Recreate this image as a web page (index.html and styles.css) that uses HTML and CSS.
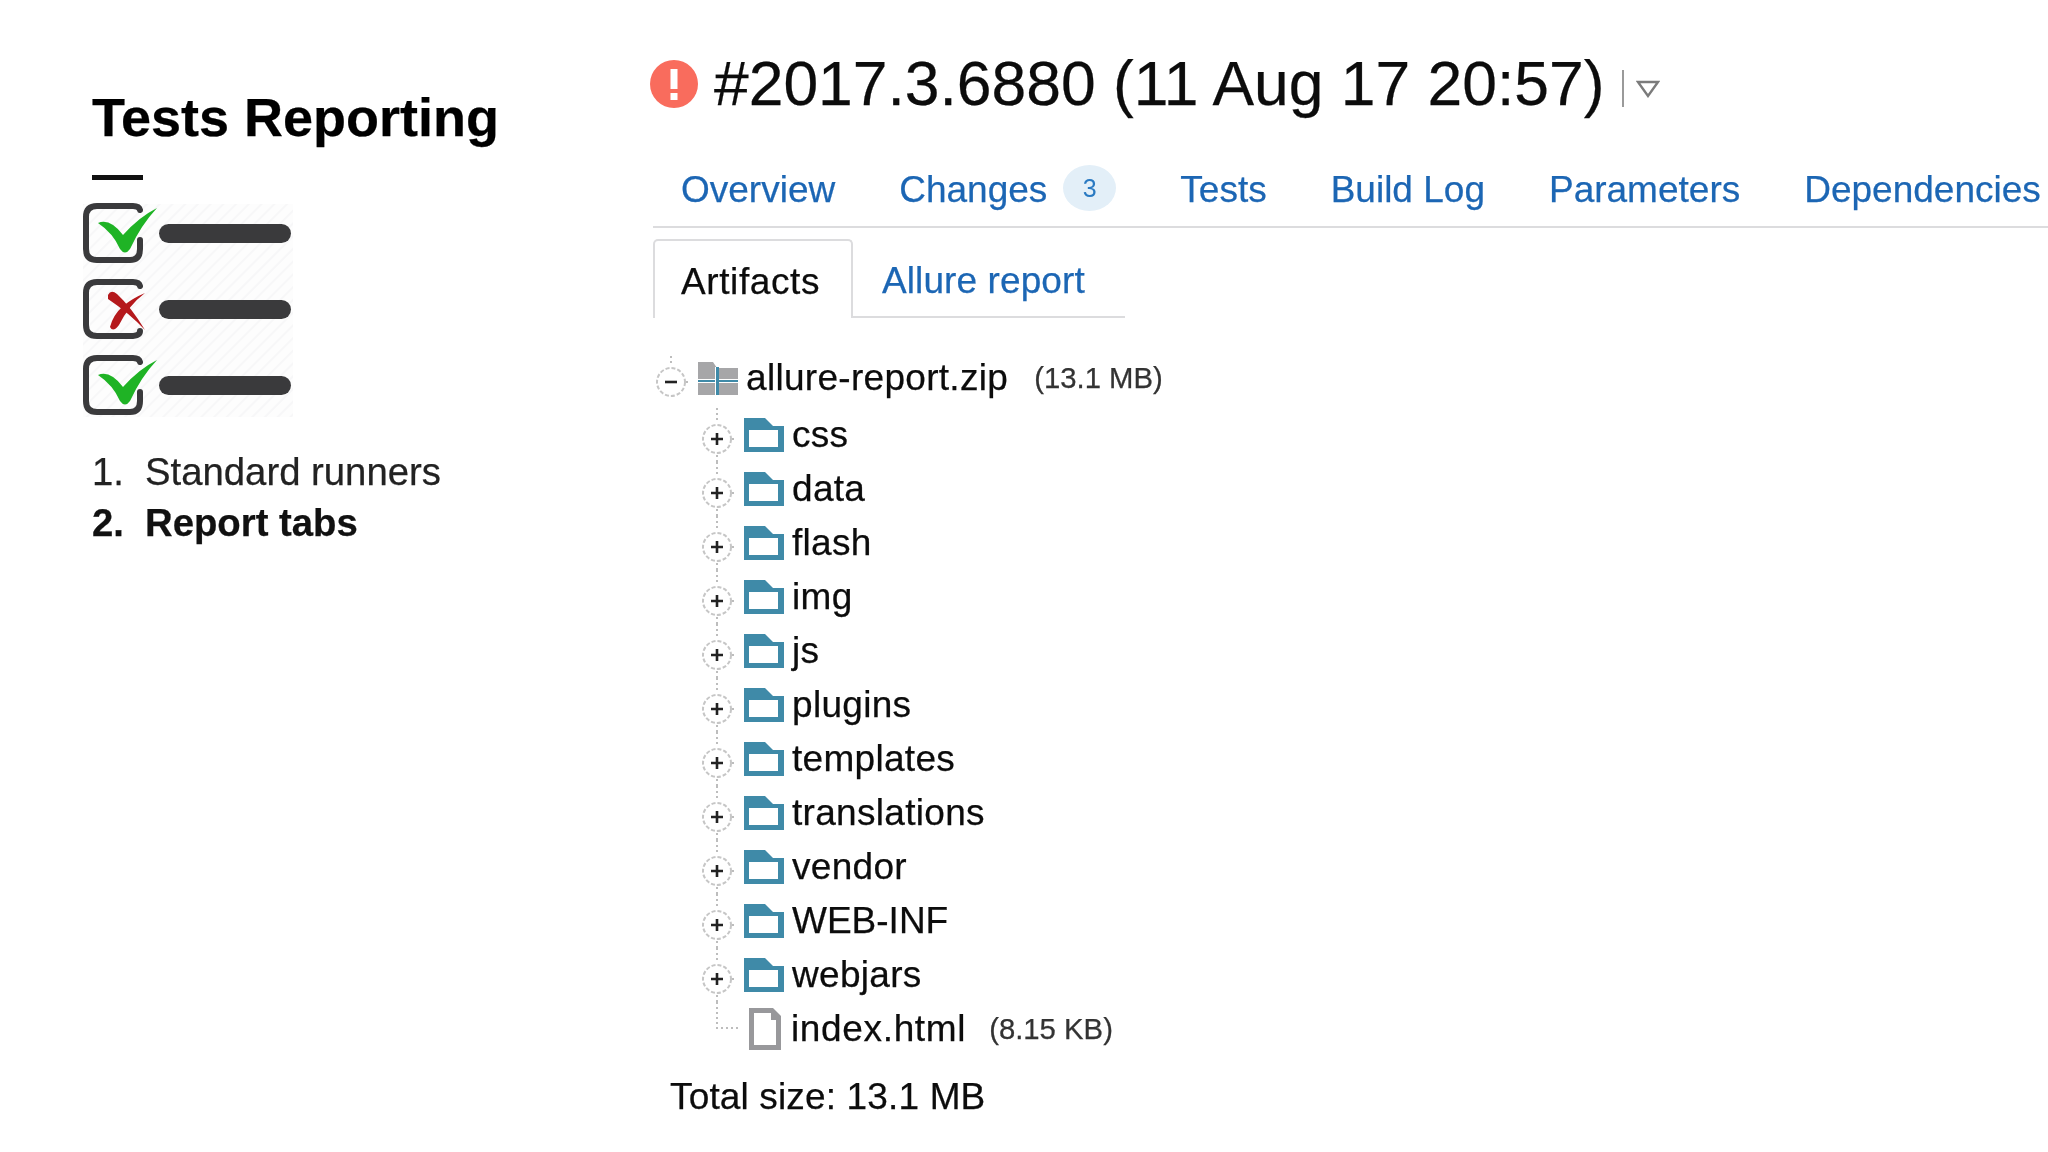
FILE: index.html
```html
<!DOCTYPE html>
<html lang="en">
<head>
<meta charset="utf-8">
<title>Tests Reporting</title>
<link rel="stylesheet" href="styles.css">
</head>
<body>
<svg class="defs" width="0" height="0" aria-hidden="true">
  <defs>
    <symbol id="plus" viewBox="0 0 36 54">
      <path class="dots" d="M18 0V12M18 42V54"/>
      <circle class="ring" cx="18" cy="31" r="14"/>
      <path class="dots" d="M33 31H36"/>
      <path class="sign" d="M12 31H24M18 25V37"/>
    </symbol>
    <symbol id="folder" viewBox="0 0 40 34">
      <path class="folder-body" d="M0 0H21L29 8H40V34H0Z"/>
      <rect class="folder-in" x="5" y="12" width="29" height="17"/>
    </symbol>
  </defs>
</svg>
<div class="page">
  <aside class="intro">
    <h2 class="intro-title">Tests Reporting</h2>
    <div class="rule"></div>
    <svg class="checklist" width="210" height="214" viewBox="0 0 210 214" aria-hidden="true">
      <defs>
        <pattern id="hatch" width="9" height="9" patternUnits="userSpaceOnUse" patternTransform="rotate(45)">
          <rect width="9" height="9" fill="#fdfdfd"/>
          <rect width="2" height="9" fill="#f7f7f8"/>
        </pattern>
      </defs>
      <rect x="0" y="1" width="210" height="213" fill="url(#hatch)"/>
      <g fill="none" stroke="#3a3a3c" stroke-width="6" stroke-linecap="round">
        <path d="M57 7Q56 3 50 3H14Q3 3 3 14V46Q3 57 14 57H47Q57 57 57 46V37"/>
        <path d="M57 83Q56 79 50 79H14Q3 79 3 90V122Q3 133 14 133H47Q57 133 57 128"/>
        <path d="M57 159Q56 155 50 155H14Q3 155 3 166V198Q3 209 14 209H47Q57 209 57 198V189"/>
      </g>
      <g fill="#3a3a3c">
        <rect x="76" y="21" width="132" height="19" rx="9.5"/>
        <rect x="76" y="97" width="132" height="19" rx="9.5"/>
        <rect x="76" y="173" width="132" height="19" rx="9.5"/>
      </g>
      <g fill="#1fb325">
        <path d="M15 20Q27 15 40 32Q56 14 74 5Q58 22 47 46Q42 53 37 46Q30 30 15 20Z"/>
        <path d="M15 172Q27 167 40 184Q56 166 74 157Q58 174 47 198Q42 205 37 198Q30 182 15 172Z"/>
      </g>
      <g fill="#b5191c">
        <path d="M25 92Q28 86 34 91Q48 104 62 127Q46 110 25 96Z"/>
        <path d="M62 90Q46 102 36 122Q30 130 27 124Q30 112 40 103Q50 95 62 90Z"/>
      </g>
    </svg>
    <ol class="topics">
      <li class="topic"><span class="topic-num">1.</span><span>Standard runners</span></li>
      <li class="topic topic-current"><span class="topic-num">2.</span><span>Report tabs</span></li>
    </ol>
  </aside>
  <main class="build">
    <header class="build-head">
      <svg class="status" width="48" height="48" viewBox="0 0 48 48" aria-hidden="true">
        <circle cx="24" cy="24" r="24" fill="#f96c5d"/>
        <rect x="20.5" y="9" width="7" height="20" fill="#fff"/>
        <rect x="20.5" y="33" width="7" height="7" fill="#fff"/>
      </svg>
      <h1 class="build-title">#2017.3.6880 (11 Aug 17 20:57)</h1>
      <span class="pipe"></span>
      <svg class="caret" width="24" height="18" viewBox="0 0 24 18" aria-hidden="true">
        <path d="M2 2H22L12 16Z" fill="none" stroke="#7b7b7b" stroke-width="2.4"/>
      </svg>
    </header>
    <nav class="nav">
      <a class="nav-link">Overview</a>
      <a class="nav-link nav-changes">Changes<span class="badge">3</span></a>
      <a class="nav-link">Tests</a>
      <a class="nav-link">Build Log</a>
      <a class="nav-link">Parameters</a>
      <a class="nav-link">Dependencies</a>
    </nav>
    <div class="subtabs">
      <span class="subtab subtab-active">Artifacts</span>
      <a class="subtab">Allure report</a>
    </div>
    <ul class="tree">
      <li class="row row-root">
        <svg class="expander" width="36" height="54" viewBox="0 0 36 54" aria-hidden="true">
          <path class="dots" d="M18 5V12"/>
          <circle class="ring" cx="18" cy="31" r="14"/>
          <path class="dots" d="M33 31H36"/>
          <path class="sign" d="M12 31H24"/>
        </svg>
        <svg class="ticon" width="40" height="33" viewBox="0 0 40 33" aria-hidden="true">
          <path d="M0 0H15L19 6H40V33H0Z" fill="#a6a6a8"/>
          <rect x="0" y="17" width="40" height="4" fill="#fff"/>
          <rect x="0" y="18" width="40" height="2" fill="#3f8aa8"/>
          <rect x="17" y="5" width="4" height="28" fill="#fff"/>
          <rect x="18" y="5" width="3" height="28" fill="#3f8aa8"/>
        </svg>
        <span class="name">allure-report.zip</span><span class="size">(13.1 MB)</span>
      </li>
      <li class="row"><svg class="expander" width="36" height="54"><use href="#plus"/></svg><svg class="ticon" width="40" height="34"><use href="#folder"/></svg><span class="name">css</span></li>
      <li class="row"><svg class="expander" width="36" height="54"><use href="#plus"/></svg><svg class="ticon" width="40" height="34"><use href="#folder"/></svg><span class="name">data</span></li>
      <li class="row"><svg class="expander" width="36" height="54"><use href="#plus"/></svg><svg class="ticon" width="40" height="34"><use href="#folder"/></svg><span class="name">flash</span></li>
      <li class="row"><svg class="expander" width="36" height="54"><use href="#plus"/></svg><svg class="ticon" width="40" height="34"><use href="#folder"/></svg><span class="name">img</span></li>
      <li class="row"><svg class="expander" width="36" height="54"><use href="#plus"/></svg><svg class="ticon" width="40" height="34"><use href="#folder"/></svg><span class="name">js</span></li>
      <li class="row"><svg class="expander" width="36" height="54"><use href="#plus"/></svg><svg class="ticon" width="40" height="34"><use href="#folder"/></svg><span class="name">plugins</span></li>
      <li class="row"><svg class="expander" width="36" height="54"><use href="#plus"/></svg><svg class="ticon" width="40" height="34"><use href="#folder"/></svg><span class="name">templates</span></li>
      <li class="row"><svg class="expander" width="36" height="54"><use href="#plus"/></svg><svg class="ticon" width="40" height="34"><use href="#folder"/></svg><span class="name">translations</span></li>
      <li class="row"><svg class="expander" width="36" height="54"><use href="#plus"/></svg><svg class="ticon" width="40" height="34"><use href="#folder"/></svg><span class="name">vendor</span></li>
      <li class="row"><svg class="expander" width="36" height="54"><use href="#plus"/></svg><svg class="ticon" width="40" height="34"><use href="#folder"/></svg><span class="name name-caps">WEB-INF</span></li>
      <li class="row"><svg class="expander" width="36" height="54"><use href="#plus"/></svg><svg class="ticon" width="40" height="34"><use href="#folder"/></svg><span class="name">webjars</span></li>
      <li class="row">
        <svg class="expander" width="36" height="54" viewBox="0 0 36 54" aria-hidden="true">
          <path class="dots" d="M18 0V26H40"/>
        </svg>
        <svg class="ticon ticon-file" width="32" height="42" viewBox="0 0 32 42" aria-hidden="true">
          <path d="M0 0H24L32 8V42H0Z" fill="#98989b"/>
          <path d="M5 5H22V12H27V37H5Z" fill="#fff"/>
        </svg>
        <span class="name name-file">index.html</span><span class="size size-file">(8.15 KB)</span>
      </li>
    </ul>
    <p class="total">Total size: 13.1 MB</p>
  </main>
</div>
</body>
</html>
```
FILE: styles.css
```css
* { box-sizing: border-box; }
html, body { margin: 0; padding: 0; background: #fff; }
body {
  width: 2048px;
  height: 1152px;
  overflow: hidden;
  font-family: "Liberation Sans", Arial, sans-serif;
  color: #0c0c0c;
}
.defs { position: absolute; }
.page {
  display: grid;
  grid-template-columns: 653px 1fr;
  height: 100%;
  filter: blur(0.45px);
  -webkit-text-stroke: 0.25px currentColor;
}

/* left */
.intro { padding: 82px 0 0 92px; }
.intro-title {
  margin: 0;
  font-size: 54px;
  line-height: 70px;
  font-weight: 700;
  color: #000;
}
.rule { width: 51px; height: 5px; margin-top: 23px; background: #111; }
.checklist { display: block; margin: 23px 0 0 -9px; }
.topics { list-style: none; margin: 29px 0 0; padding: 0; font-size: 38.3px; line-height: 51px; color: #222; }
.topic { display: flex; }
.topic-num { width: 53px; }
.topic-current { font-weight: 700; color: #111; }

/* header */
.build-head { display: flex; align-items: center; height: 72px; margin-top: 48px; margin-left: -3px; }
.status { flex: none; margin-right: 16px; }
.build-title { margin: 0; font-size: 62.4px; line-height: 72px; font-weight: 400; white-space: nowrap; color: #0c0c0c; }
.pipe { width: 2px; height: 37px; margin: 8px 12px 0 18px; background: #9a9a9a; }
.caret { margin-top: 10px; }

/* nav */
.nav {
  display: flex;
  gap: 64px;
  height: 78px;
  margin-top: 30px;
  padding-left: 28px;
  border-bottom: 2px solid #dcdcde;
  font-size: 37px;
  line-height: 80px;
  white-space: nowrap;
}
.nav-link { color: #1c66b4; }
.nav-changes { display: flex; align-items: flex-start; gap: 16px; }
.badge {
  display: block;
  width: 53px;
  height: 46px;
  margin-top: 15px;
  border-radius: 50%;
  background: #e3eff8;
  color: #2a7ac2;
  font-size: 25px;
  line-height: 46px;
  text-align: center;
  -webkit-text-stroke: 0;
}

/* sub tabs */
.subtabs {
  display: flex;
  width: 472px;
  height: 79px;
  margin-top: 11px;
  border-bottom: 2px solid #dcdcde;
  font-size: 37px;
  line-height: 84px;
}
.subtab { color: #1c66b4; padding-left: 29px; letter-spacing: 0.1px; }
.subtab-active {
  width: 200px;
  height: 79px;
  padding-left: 26px;
  color: #0c0c0c;
  background: #fff;
  border: 2px solid #dcdcde;
  border-bottom: 0;
  border-radius: 5px 5px 0 0;
  line-height: 81px;
  letter-spacing: 0.6px;
}

/* tree */
.tree { list-style: none; margin: 33px 0 0; padding: 0 0 0 46px; }
.row { display: flex; align-items: center; height: 54px; font-size: 37px; line-height: 54px; white-space: nowrap; }
.row-root { margin: 0 0 3px -46px; padding-left: 0; }
.expander { flex: none; margin-right: 9px; overflow: visible; }
.ticon { flex: none; margin-right: 8px; }
.ticon-file { margin: 0 10px 0 5px; }
.name { color: #0c0c0c; letter-spacing: 0.3px; }
.name-caps { letter-spacing: 0; }
.name-file { letter-spacing: 0.65px; }
.size { margin-left: 26px; font-size: 29.3px; color: #333; }
.size-file { margin-left: 23px; }
.dots { fill: none; stroke: #bdbdbd; stroke-width: 2; stroke-dasharray: 2 3; }
.ring { fill: #fff; stroke: #c6c6c6; stroke-width: 2; stroke-dasharray: 4 2; }
.sign { fill: none; stroke: #222; stroke-width: 2.6; }
.folder-body { fill: #3f8aa8; }
.folder-in { fill: #fff; }

.total { margin: 14px 0 0 17px; font-size: 37px; line-height: 54px; color: #0c0c0c; letter-spacing: 0.15px; }
```
